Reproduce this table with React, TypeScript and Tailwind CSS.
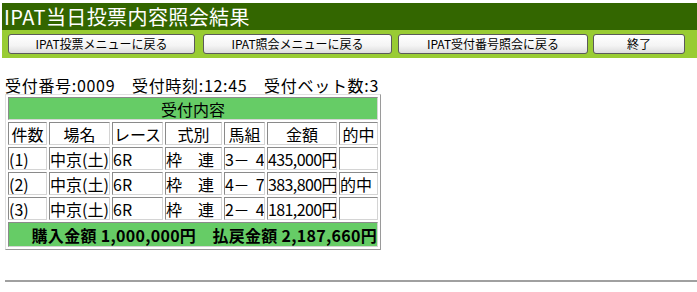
const fontStack = 'font-["Noto_Sans_CJK_JP",sans-serif]'

const buttons = [
  { label: 'IPAT投票メニューに戻る', cls: 'ml-0 w-[187px]' },
  { label: 'IPAT照会メニューに戻る', cls: 'ml-[8px] w-[189px]' },
  { label: 'IPAT受付番号照会に戻る', cls: 'ml-[6px] w-[190px]' },
  { label: '終了', cls: 'ml-[5px] w-[92px]' },
]

const rows = [
  { no: '(1)', place: '中京(土)', race: '6R', kind: '枠　連', combo: '3－\u00a0\u00a04', amount: '435,000円', hit: '' },
  { no: '(2)', place: '中京(土)', race: '6R', kind: '枠　連', combo: '4－\u00a0\u00a07', amount: '383,800円', hit: '的中' },
  { no: '(3)', place: '中京(土)', race: '6R', kind: '枠　連', combo: '2－\u00a0\u00a04', amount: '181,200円', hit: '' },
]

const cell = 'h-[23px] overflow-hidden border border-t-[#8a8a8a] border-l-[#8a8a8a] border-b-[#d4d4d4] border-r-[#d4d4d4] px-0 py-0 text-[16px] leading-[20px] whitespace-nowrap'

function App() {
  return (
    <div className={`min-h-[292px] w-[697px] bg-white pt-[3px] pl-[2px] text-black ${fontStack}`}>
      <div className="flex h-[27px] items-center bg-[#336600] pl-[2px] text-[20px] leading-[24px] tracking-[0.4px] text-white">
        IPAT当日投票内容照会結果
      </div>
      <div className="flex h-[28px] items-center bg-[#99cc33] pl-[6px]">
        {buttons.map((b) => (
          <button
            key={b.label}
            type="button"
            className={`${b.cls} h-[20px] rounded-[3px] border border-[#5a5a5a] bg-[linear-gradient(#ffffff,#f4f4f4_60%,#dcdcdc)] text-[12px] leading-[16px] text-black`}
          >
            {b.label}
          </button>
        ))}
      </div>

      <p className="mt-[18px] pl-[3px] text-[16px] leading-[18px] tracking-[0.7px]">
        受付番号:0009　受付時刻:12:45　受付ベット数:3
      </p>

      <table className="ml-[3px] w-[376px] table-fixed border-separate border-spacing-[2px] border border-t-[#e0e0e0] border-l-[#e0e0e0] border-b-[#9a9a9a] border-r-[#9a9a9a]">
        <colgroup>
          <col className="w-[39px]" />
          <col className="w-[61px]" />
          <col className="w-[51px]" />
          <col className="w-[57px]" />
          <col className="w-[41px]" />
          <col className="w-[70px]" />
          <col className="w-[39px]" />
        </colgroup>
        <tbody>
          <tr>
            <td colSpan={7} className={`${cell} bg-[#66cc66] text-center`}>
              受付内容
            </td>
          </tr>
          <tr>
            <td className={`${cell} text-center`}>件数</td>
            <td className={`${cell} text-center`}>場名</td>
            <td className={`${cell} text-center`}>レース</td>
            <td className={`${cell} text-center`}>式別</td>
            <td className={`${cell} text-center`}>馬組</td>
            <td className={`${cell} text-center`}>金額</td>
            <td className={`${cell} text-center`}>的中</td>
          </tr>
          {rows.map((r) => (
            <tr key={r.no}>
              <td className={`${cell} text-[14px]`}>{r.no}</td>
              <td className={cell}>{r.place}</td>
              <td className={cell}>{r.race}</td>
              <td className={cell}>{r.kind}</td>
              <td className={`${cell} tracking-[-0.3px]`}>{r.combo}</td>
              <td className={`${cell} tracking-[-0.6px]`}>{r.amount}</td>
              <td className={cell}>{r.hit}</td>
            </tr>
          ))}
          <tr>
            <td colSpan={7} className={`${cell} h-[25px] bg-[#66cc66] text-right font-bold text-[16px] tracking-[0.3px]`}>
              購入金額 1,000,000円　払戻金額 2,187,660円
            </td>
          </tr>
        </tbody>
      </table>

      <hr className="ml-[3px] mt-[30px] border-t-2 border-t-[#a0a0a0]" />
    </div>
  )
}

export default App
